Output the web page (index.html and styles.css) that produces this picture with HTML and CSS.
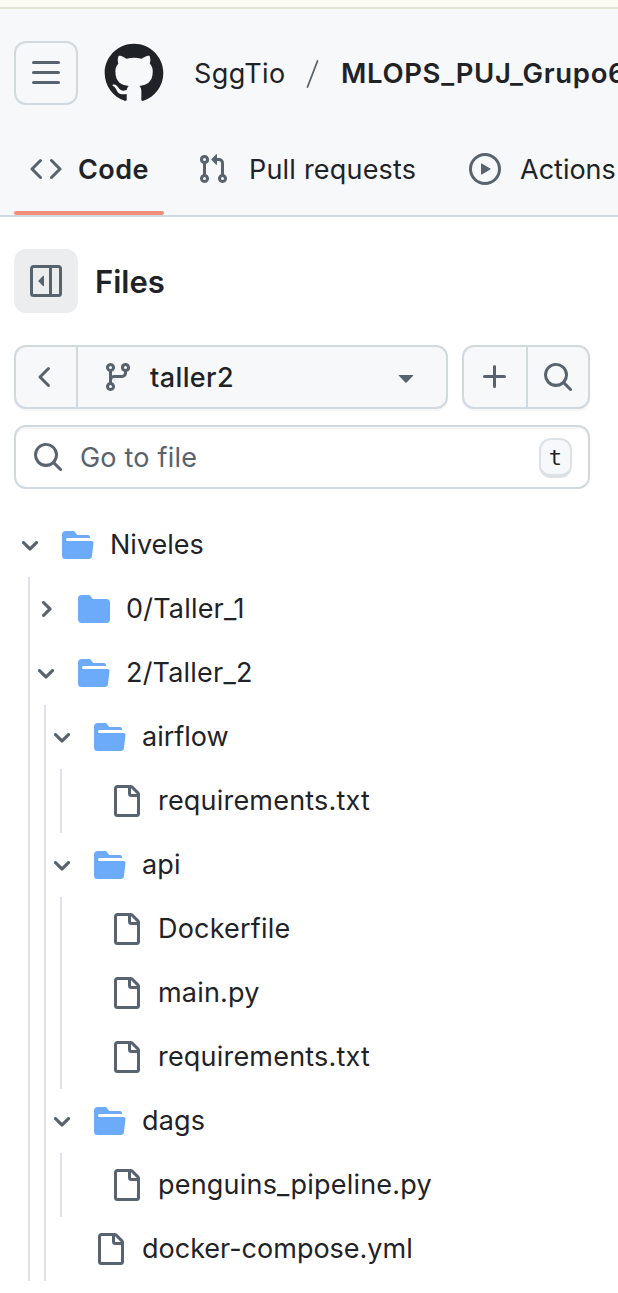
FILE: index.html
```html
<!DOCTYPE html>
<html lang="es">
<head>
<meta charset="utf-8">
<title>Files</title>
<link rel="stylesheet" href="styles.css">
</head>
<body>
<svg class="sprite" aria-hidden="true">
  <symbol id="search" viewBox="0 0 16 16"><path d="M10.68 11.74a6 6 0 0 1-7.922-8.982 6 6 0 0 1 8.982 7.922l3.04 3.04a.749.749 0 0 1-.326 1.275.749.749 0 0 1-.734-.215ZM11.5 7a4.499 4.499 0 1 0-8.997 0A4.499 4.499 0 0 0 11.5 7Z"/></symbol>
  <symbol id="open" viewBox="0 0 16 16"><path d="M.513 1.513A1.75 1.75 0 0 1 1.75 1h3.5c.55 0 1.07.26 1.4.7l.9 1.2a.25.25 0 0 0 .2.1H13a1 1 0 0 1 1 1v.5H2.75a.75.75 0 0 0 0 1.5h11.978a1 1 0 0 1 .994 1.117L15 13.25A1.75 1.75 0 0 1 13.25 15H1.75A1.75 1.75 0 0 1 0 13.25V2.75c0-.464.184-.91.513-1.237Z"/></symbol>
  <symbol id="closed" viewBox="0 0 16 16"><path d="M1.75 1A1.75 1.75 0 0 0 0 2.75v10.5C0 14.216.784 15 1.75 15h12.5A1.75 1.75 0 0 0 16 13.25v-8.5A1.75 1.75 0 0 0 14.25 3H7.5a.25.25 0 0 1-.2-.1l-.9-1.2C6.07 1.26 5.55 1 5 1H1.75Z"/></symbol>
  <symbol id="file" viewBox="0 0 16 16"><path d="M2 1.75C2 .784 2.784 0 3.75 0h6.586c.464 0 .909.184 1.237.513l2.914 2.914c.329.328.513.773.513 1.237v9.586A1.75 1.75 0 0 1 13.25 16h-9.5A1.75 1.75 0 0 1 2 14.25Zm1.75-.25a.25.25 0 0 0-.25.25v12.5c0 .138.112.25.25.25h9.5a.25.25 0 0 0 .25-.25V6h-2.75A1.75 1.75 0 0 1 9 4.25V1.5Zm6.75.062V4.25c0 .138.112.25.25.25h2.688l-.011-.013-2.914-2.914-.013-.011Z"/></symbol>
  <symbol id="down" viewBox="0 0 12 12"><path d="M6 8.825c-.2 0-.4-.1-.5-.2l-3.3-3.3c-.3-.3-.3-.8 0-1.1.3-.3.8-.3 1.1 0l2.7 2.7 2.7-2.7c.3-.3.8-.3 1.1 0 .3.3.3.8 0 1.1l-3.2 3.2c-.2.2-.4.3-.6.3Z"/></symbol>
  <symbol id="right" viewBox="0 0 12 12"><path d="M4.7 10c-.2 0-.4-.1-.5-.2-.3-.3-.3-.8 0-1.1L6.9 6 4.2 3.3c-.3-.3-.3-.8 0-1.1.3-.3.8-.3 1.1 0l3.3 3.2c.3.3.3.8 0 1.1L5.3 9.7c-.2.2-.4.3-.6.3Z"/></symbol>
</svg>
<div class="strip"></div>
<header class="header">
  <div class="topbar">
    <button class="menu" aria-label="Menu"><svg class="icon" viewBox="0 0 16 16"><path d="M1 2.75A.75.75 0 0 1 1.75 2h12.5a.75.75 0 0 1 0 1.5H1.75A.75.75 0 0 1 1 2.75Zm0 5A.75.75 0 0 1 1.75 7h12.5a.75.75 0 0 1 0 1.5H1.75A.75.75 0 0 1 1 7.75ZM1.75 12h12.5a.75.75 0 0 1 0 1.5H1.75a.75.75 0 0 1 0-1.5Z"/></svg></button>
    <svg class="mark" viewBox="0 0 24 24"><path d="M12 1C5.9225 1 1 5.9225 1 12C1 16.8675 4.14875 20.9787 8.52125 22.4362C9.07125 22.5325 9.2775 22.2025 9.2775 21.9137C9.2775 21.6525 9.26375 20.7862 9.26375 19.865C6.5 20.3737 5.785 19.1912 5.565 18.5725C5.44125 18.2562 4.905 17.28 4.4375 17.0187C4.0525 16.8125 3.5025 16.3037 4.42375 16.29C5.29 16.2762 5.90875 17.0875 6.115 17.4175C7.105 19.0812 8.68625 18.6137 9.31875 18.325C9.415 17.61 9.70375 17.1287 10.02 16.8537C7.5725 16.5787 5.015 15.63 5.015 11.4225C5.015 10.2262 5.44125 9.23625 6.1425 8.46625C6.0325 8.19125 5.6475 7.06375 6.2525 5.55125C6.2525 5.55125 7.17375 5.2625 9.2775 6.67875C10.1575 6.43125 11.0925 6.3075 12.0275 6.3075C12.9625 6.3075 13.8975 6.43125 14.7775 6.67875C16.8813 5.24875 17.8025 5.55125 17.8025 5.55125C18.4075 7.06375 18.0225 8.19125 17.9125 8.46625C18.6138 9.23625 19.04 10.2125 19.04 11.4225C19.04 15.6437 16.4688 16.5787 14.0213 16.8537C14.42 17.1975 14.7638 17.8575 14.7638 18.8887C14.7638 20.36 14.75 21.5425 14.75 21.9137C14.75 22.2025 14.9563 22.5462 15.5063 22.4362C19.8513 20.9787 23 16.8537 23 12C23 5.9225 18.0775 1 12 1Z"/></svg>
    <span class="owner">SggTio</span>
    <svg class="slash" viewBox="0 0 14 30"><path d="M1.5 28 11.5 2"/></svg>
    <span class="repo">MLOPS_PUJ_Grupo6</span>
  </div>
  <nav class="tabs">
    <a class="tab tab-code"><svg class="icon" viewBox="0 0 16 16"><path d="m11.28 3.22 4.25 4.25a.75.75 0 0 1 0 1.06l-4.25 4.25a.749.749 0 0 1-1.275-.326.749.749 0 0 1 .215-.734L13.94 8l-3.72-3.72a.749.749 0 0 1 .326-1.275.749.749 0 0 1 .734.215Zm-6.56 0a.751.751 0 0 1 1.042.018.751.751 0 0 1 .018 1.042L2.06 8l3.72 3.72a.749.749 0 0 1-.326 1.275.749.749 0 0 1-.734-.215L.47 8.53a.75.75 0 0 1 0-1.06Z"/></svg><span class="label label-code">Code</span></a>
    <a class="tab tab-pulls"><svg class="icon" viewBox="0 0 16 16"><path d="M1.5 3.25a2.25 2.25 0 1 1 3 2.122v5.256a2.251 2.251 0 1 1-1.5 0V5.372A2.25 2.25 0 0 1 1.5 3.25Zm5.677-.177L9.573.677A.25.25 0 0 1 10 .854V2.5h1A2.5 2.5 0 0 1 13.5 5v5.628a2.251 2.251 0 1 1-1.5 0V5a1 1 0 0 0-1-1h-1v1.646a.25.25 0 0 1-.427.177L7.177 3.427a.25.25 0 0 1 0-.354ZM3.75 2.5a.75.75 0 1 0 0 1.5.75.75 0 0 0 0-1.5Zm0 9.5a.75.75 0 1 0 0 1.5.75.75 0 0 0 0-1.5Zm8.25.75a.75.75 0 1 0 1.5 0 .75.75 0 0 0-1.5 0Z"/></svg><span class="label">Pull requests</span></a>
    <a class="tab tab-actions"><svg class="icon" viewBox="0 0 16 16"><path d="M8 0a8 8 0 1 1 0 16A8 8 0 0 1 8 0ZM1.5 8a6.5 6.5 0 1 0 13 0 6.5 6.5 0 0 0-13 0Zm4.879-2.773 4.264 2.559a.25.25 0 0 1 0 .428l-4.264 2.559A.25.25 0 0 1 6 10.559V5.442a.25.25 0 0 1 .379-.215Z"/></svg><span class="label label-actions">Actions</span></a>
  </nav>
</header>
<main class="side">
  <div class="title-row">
    <button class="collapse" aria-label="Collapse"><svg class="icon" viewBox="0 0 16 16"><path d="m4.177 7.823 2.396-2.396A.25.25 0 0 1 7 5.604v4.792a.25.25 0 0 1-.427.177L4.177 8.177a.25.25 0 0 1 0-.354Z"/><path d="M0 1.75C0 .784.784 0 1.75 0h12.5C15.216 0 16 .784 16 1.75v12.5A1.75 1.75 0 0 1 14.25 16H1.75A1.75 1.75 0 0 1 0 14.25Zm1.75-.25a.25.25 0 0 0-.25.25v12.5c0 .138.112.25.25.25H9.5v-13Zm12.5 13a.25.25 0 0 0 .25-.25V1.75a.25.25 0 0 0-.25-.25H11v13Z"/></svg></button>
    <h2 class="title">Files</h2>
  </div>
  <div class="controls">
    <div class="group group-branch">
      <button class="cell cell-back" aria-label="Back"><svg class="icon" viewBox="0 0 16 16"><path d="M9.78 12.78a.75.75 0 0 1-1.06 0L4.47 8.53a.75.75 0 0 1 0-1.06l4.25-4.25a.751.751 0 0 1 1.042.018.751.751 0 0 1 .018 1.042L6.06 8l3.72 3.72a.75.75 0 0 1 0 1.06Z"/></svg></button>
      <button class="cell cell-branch"><svg class="icon" viewBox="0 0 16 16"><path d="M9.5 3.25a2.25 2.25 0 1 1 3 2.122V6A2.5 2.5 0 0 1 10 8.5H6a1 1 0 0 0-1 1v1.128a2.251 2.251 0 1 1-1.5 0V5.372a2.25 2.25 0 1 1 1.5 0v1.836A2.493 2.493 0 0 1 6 7h4a1 1 0 0 0 1-1v-.628A2.25 2.25 0 0 1 9.5 3.25Zm-6 0a.75.75 0 1 0 1.5 0 .75.75 0 0 0-1.5 0Zm8.25-.75a.75.75 0 1 0 0 1.5.75.75 0 0 0 0-1.5ZM4.25 12a.75.75 0 1 0 0 1.5.75.75 0 0 0 0-1.5Z"/></svg><span class="branch-name">taller2</span><svg class="icon" viewBox="0 0 16 16"><path d="m4.427 7.427 3.396 3.396a.25.25 0 0 0 .354 0l3.396-3.396A.25.25 0 0 0 11.396 7H4.604a.25.25 0 0 0-.177.427Z"/></svg></button>
    </div>
    <div class="group group-tools">
      <button class="cell cell-add" aria-label="Add"><svg class="icon" viewBox="0 0 16 16"><path d="M7.75 2a.75.75 0 0 1 .75.75V7h4.25a.75.75 0 0 1 0 1.5H8.5v4.25a.75.75 0 0 1-1.5 0V8.5H2.75a.75.75 0 0 1 0-1.5H7V2.75A.75.75 0 0 1 7.75 2Z"/></svg></button>
      <button class="cell cell-search" aria-label="Search"><svg class="icon"><use href="#search"/></svg></button>
    </div>
  </div>
  <div class="finder"><svg class="icon"><use href="#search"/></svg><span class="hint">Go to file</span><kbd class="key">t</kbd></div>
  <ul class="tree">
    <li><div class="row"><svg class="chev"><use href="#down"/></svg><svg class="icon folder"><use href="#open"/></svg><span class="flat">Niveles</span></div>
      <ul>
        <li><div class="row"><svg class="chev"><use href="#right"/></svg><svg class="icon folder"><use href="#closed"/></svg><span>0/Taller_1</span></div></li>
        <li><div class="row"><svg class="chev"><use href="#down"/></svg><svg class="icon folder"><use href="#open"/></svg><span>2/Taller_2</span></div>
          <ul>
            <li><div class="row"><svg class="chev"><use href="#down"/></svg><svg class="icon folder"><use href="#open"/></svg><span class="flat">airflow</span></div>
              <ul>
                <li><div class="row leaf"><svg class="icon"><use href="#file"/></svg><span>requirements.txt</span></div></li>
              </ul>
            </li>
            <li><div class="row"><svg class="chev"><use href="#down"/></svg><svg class="icon folder"><use href="#open"/></svg><span>api</span></div>
              <ul>
                <li><div class="row leaf"><svg class="icon"><use href="#file"/></svg><span>Dockerfile</span></div></li>
                <li><div class="row leaf"><svg class="icon"><use href="#file"/></svg><span>main.py</span></div></li>
                <li><div class="row leaf"><svg class="icon"><use href="#file"/></svg><span>requirements.txt</span></div></li>
              </ul>
            </li>
            <li><div class="row"><svg class="chev"><use href="#down"/></svg><svg class="icon folder"><use href="#open"/></svg><span>dags</span></div>
              <ul>
                <li><div class="row leaf"><svg class="icon"><use href="#file"/></svg><span>penguins_pipeline.py</span></div></li>
              </ul>
            </li>
            <li><div class="row leaf"><svg class="icon"><use href="#file"/></svg><span class="flat">docker-compose.yml</span></div></li>
          </ul>
        </li>
      </ul>
    </li>
  </ul>
</main>
</body>
</html>
```
FILE: styles.css
```css
* { box-sizing: border-box; }
body {
  margin: 0;
  min-height: 1293px;
  overflow: hidden;
  background: #fff;
  color: #1f2328;
  font: 400 27px/40px Inter, "Liberation Sans", sans-serif;
  letter-spacing: .2px;
  white-space: nowrap;
}
button { margin: 0; padding: 0; border: 0; background: none; font: inherit; color: inherit; letter-spacing: inherit; }
.sprite { display: none; }
.icon { flex: none; display: block; width: 32px; height: 32px; fill: #59636e; }
.strip { height: 9px; background: #fafaf0; border-bottom: 2px solid #dfe3d5; }

.header { height: 208px; background: #f6f8fa; border-bottom: 2px solid #d1d9e0; display: flex; flex-direction: column; overflow: hidden; }
.topbar { display: flex; align-items: center; height: 64px; margin: 32px 0 0 14px; }
.menu { flex: none; display: grid; place-items: center; width: 64px; height: 64px; border: 2px solid #d1d9e0; border-radius: 12px; }
.mark { flex: none; width: 64px; height: 64px; margin-left: 24px; fill: #1f2328; }
.owner { flex: none; width: 112px; margin-left: 28px; padding-top: 2px; letter-spacing: .4px; }
.slash { flex: none; width: 14px; height: 30px; margin-top: 1px; fill: none; stroke: #59636e; stroke-width: 1.8; stroke-linecap: round; }
.repo { flex: none; margin-left: 21px; font-size: 27.5px; font-weight: 600; letter-spacing: .65px; }

.tabs { display: flex; height: 110px; padding-left: 14px; }
.tab { flex: none; display: flex; align-items: center; gap: 16px; height: 110px; padding: 18px 0 0 16px; }
.tab-code { position: relative; width: 150px; }
.tab-code::after { content: ""; position: absolute; left: 0; right: 0; bottom: 0; height: 4px; border-radius: 2px; background: #f28f79; }
.label { padding-top: 2px; }
.label-code { font-weight: 600; letter-spacing: .4px; }
.label-actions { letter-spacing: 0; }
.tab-pulls { width: 272px; margin-left: 17px; gap: 20px; }
.tab-actions { padding-left: 16px; gap: 19px; }

.side { width: 576px; margin: 32px 0 0 14px; }
.title-row { display: flex; align-items: center; gap: 17px; }
.collapse { display: grid; place-items: center; width: 64px; height: 64px; border-radius: 12px; background: #ebedef; }
.title { margin: 0; padding-top: 2px; font-size: 31px; font-weight: 600; letter-spacing: 0; }
.controls { display: flex; gap: 14px; margin-top: 32px; }
.group { display: flex; height: 64px; border: 2px solid #d1d9e0; border-radius: 12px; background: #f6f8fa; box-shadow: 0 2px 0 #1f23280a; }
.group-branch { width: 434px; }
.group-tools { width: 128px; }
.cell { display: flex; align-items: center; }
.cell-back { width: 62px; padding-left: 14px; border-right: 2px solid #d1d9e0; }
.cell-branch { flex: 1; padding: 0 24px; }
.branch-name { margin-left: 16px; margin-right: auto; padding-top: 2px; font-weight: 500; letter-spacing: .4px; }
.cell-add { width: 64px; padding-left: 15px; border-right: 2px solid #d1d9e0; }
.cell-search { padding-left: 14px; }
.finder { display: flex; align-items: center; height: 64px; margin-top: 16px; padding: 0 16px; border: 2px solid #d1d9e0; border-radius: 12px; box-shadow: inset 0 2px 0 #1f23280a; }
.hint { margin-left: 16px; padding-top: 2px; color: #59636e; }
.key { width: 33px; height: 40px; margin: 2px 0 0 auto; border: 2px solid #dce1e6; border-bottom-width: 4px; border-radius: 12px; background: #f6f8fa; font: 22px/35px "DejaVu Sans Mono", monospace; text-align: center; }

.tree { margin: 24px 0 0; }
.tree, .tree ul { padding: 0; list-style: none; }
.tree ul { margin: 0 0 0 14px; border-left: 2px solid #dce1e6; }
.row { display: flex; align-items: center; height: 64px; }
.row span { margin-left: 16px; }
.row .flat { letter-spacing: 0; }
.chev { flex: none; width: 24px; height: 24px; margin: 0 20px 0 4px; fill: #59636e; }
.folder { fill: #6caafa; }
.leaf { padding-left: 48px; }
```
